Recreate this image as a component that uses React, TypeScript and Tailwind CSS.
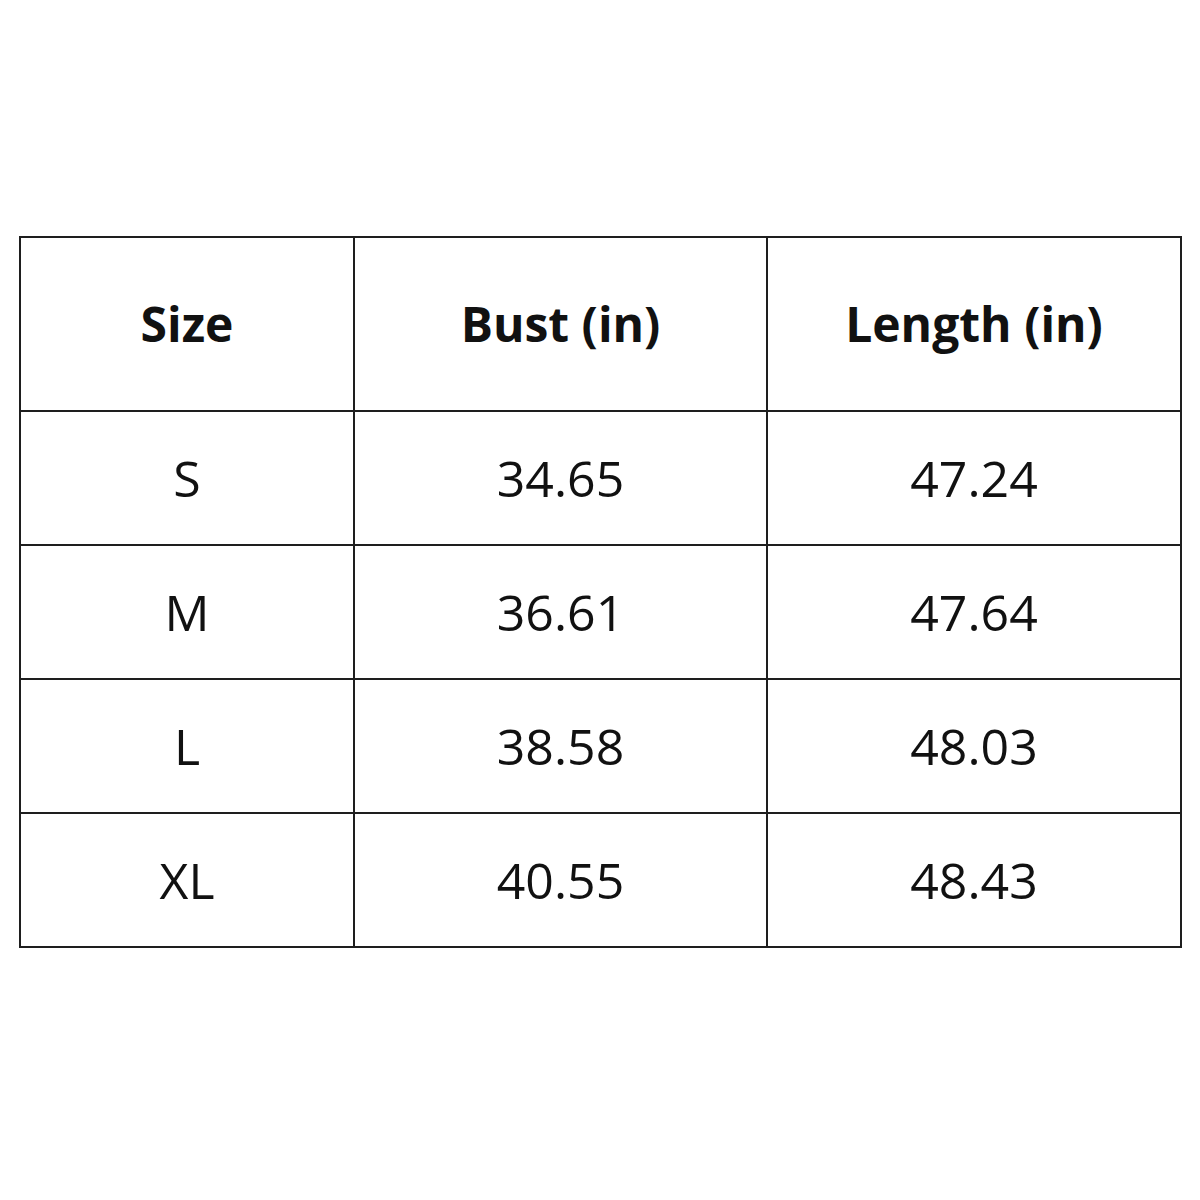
const rows = [
  ['S', '34.65', '47.24'],
  ['M', '36.61', '47.64'],
  ['L', '38.58', '48.03'],
  ['XL', '40.55', '48.43'],
];

export default function App() {
  return (
    <div className="w-[1200px] h-[1200px] bg-white pt-[236px] pl-[19px] font-['Open_Sans',sans-serif] text-[#111]">
      <table className="w-[1161px] table-fixed border-collapse">
        <colgroup>
          <col className="w-[334px]" />
          <col className="w-[413px]" />
          <col className="w-[414px]" />
        </colgroup>
        <thead>
          <tr className="h-[174px]">
            {['Size', 'Bust (in)', 'Length (in)'].map((h) => (
              <th key={h} className="border-2 border-[#1e1e1e] text-center align-middle text-[48px] font-bold">
                {h}
              </th>
            ))}
          </tr>
        </thead>
        <tbody>
          {rows.map((r) => (
            <tr key={r[0]} className="h-[134px]">
              {r.map((c, i) => (
                <td key={i} className="border-2 border-[#1e1e1e] text-center align-middle text-[50px]">
                  {c}
                </td>
              ))}
            </tr>
          ))}
        </tbody>
      </table>
    </div>
  );
}
